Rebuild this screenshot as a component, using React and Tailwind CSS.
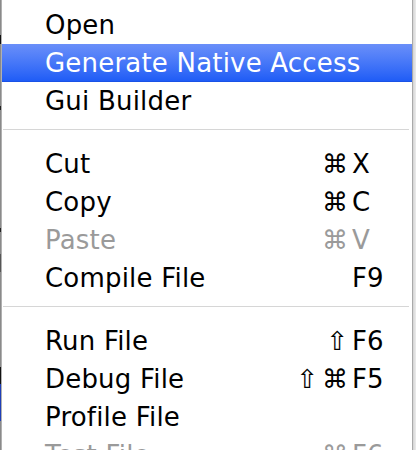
const groups = [
  [
    { label: 'Open' },
    { label: 'Generate Native Access', active: true },
    { label: 'Gui Builder' },
  ],
  [
    { label: 'Cut', mod: '⌘', key: 'X' },
    { label: 'Copy', mod: '⌘', key: 'C' },
    { label: 'Paste', mod: '⌘', key: 'V', disabled: true },
    { label: 'Compile File', key: 'F9' },
  ],
  [
    { label: 'Run File', mod: '⇧', key: 'F6' },
    { label: 'Debug File', mod: '⇧⌘', key: 'F5' },
    { label: 'Profile File' },
    { label: 'Test File', mod: '⌘', key: 'F6', disabled: true },
  ],
]

function MenuRow({ item }) {
  const color = item.active
    ? 'text-white bg-gradient-to-b from-[#6a8ff9] to-[#1f5cf6] border-b border-[#1a52e6]'
    : item.disabled
      ? 'text-[#9a9a9a]'
      : 'text-black'
  return (
    <div className={`flex h-[38px] shrink-0 items-center pl-[43px] pr-[28px] ${color}`}>
      <span className="flex-1 whitespace-nowrap tracking-[0.2px]">{item.label}</span>
      {item.key && (
        <span className="flex items-center gap-[4px] whitespace-nowrap">
          {item.mod &&
            [...item.mod].map((m) => (
              <span key={m} className="shrink-0">
                {m}
              </span>
            ))}
          <span className="w-[32px] shrink-0">{item.key}</span>
        </span>
      )}
    </div>
  )
}

export default function App() {
  return (
    <div
      className="flex h-[450px] w-[416px] overflow-hidden bg-[#e4e4e4] text-[26px] leading-none"
      style={{ fontFamily: '"DejaVu Sans", "Liberation Sans", sans-serif' }}
    >
      <div className="flex w-px flex-col bg-[#8a8a8a]">
        <div className="h-[35px]" />
        <div className="h-[9px] bg-[#111]" />
        <div className="h-[62px]" />
        <div className="h-[4px] bg-[#222]" />
        <div className="h-[118px]" />
        <div className="h-[4px] bg-[#222]" />
        <div className="h-[22px]" />
        <div className="h-[18px] bg-[#555]" />
        <div className="h-[95px]" />
        <div className="h-[17px] bg-[#111]" />
        <div className="h-[37px] bg-[#1f3fb8]" />
      </div>
      <div className="flex w-[411px] flex-col border-l border-[#b0b0b0] bg-white pt-[6px]">
        {groups.map((group, i) => (
          <div key={i} className="flex flex-col">
            {i > 0 && (
              <div className="h-[25px] shrink-0 pt-[9px]">
                <div className="mx-[1px] mr-[3px] h-px bg-[#d6d6d6]" />
              </div>
            )}
            {group.map((item) => (
              <MenuRow key={item.label} item={item} />
            ))}
          </div>
        ))}
      </div>
      <div className="flex w-[4px]">
        <div className="w-px bg-[#a9a9a9]" />
        <div className="flex-1 bg-gradient-to-r from-[#d4d4d4] to-[#ececec]" />
      </div>
    </div>
  )
}
